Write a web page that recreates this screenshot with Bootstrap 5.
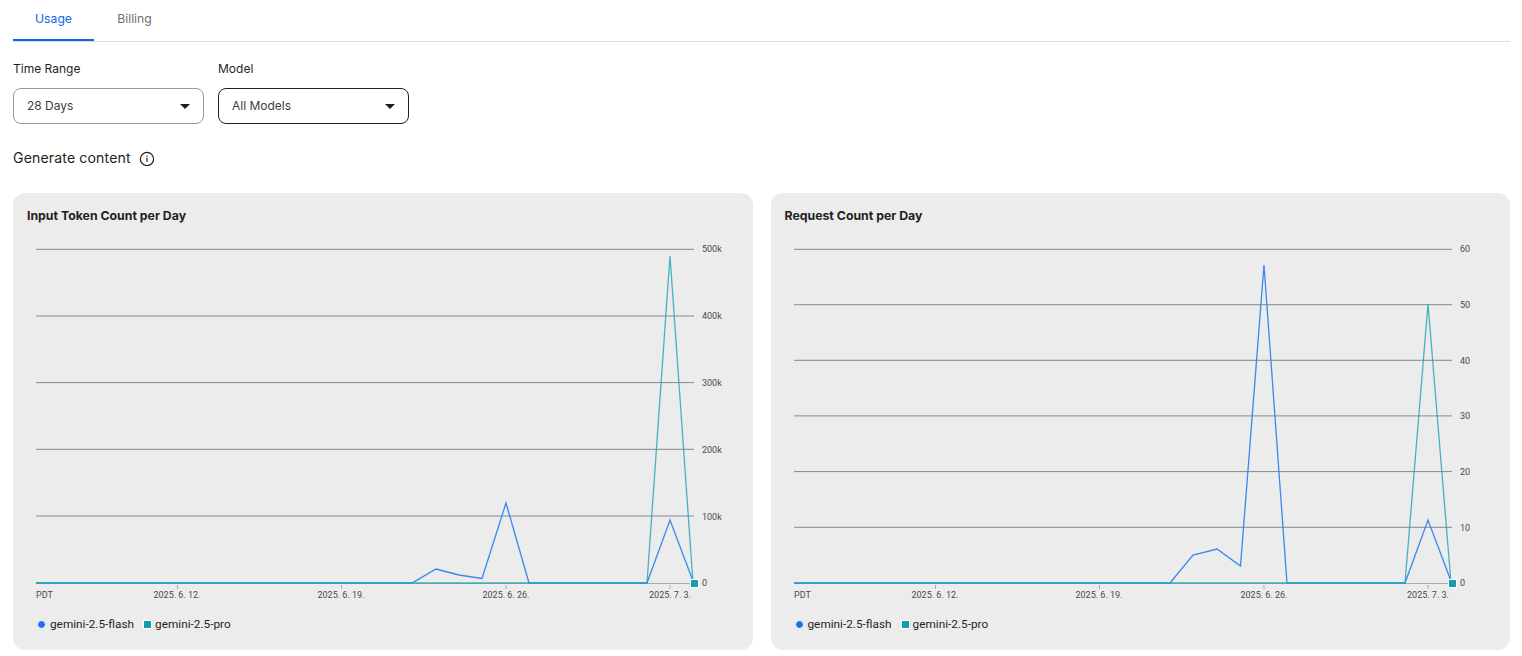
<!DOCTYPE html>
<html lang="en">
<head>
<meta charset="utf-8">
<title>Usage</title>
<link rel="stylesheet" href="https://cdn.jsdelivr.net/npm/bootstrap@5.3.0/dist/css/bootstrap.min.css">
<style>
html,body{height:656px;overflow:hidden;background:#fff}
body{font-family:Inter,Roboto,"Liberation Sans",sans-serif;color:#1f1f1f;padding:0 12px 0 13px}
.tabbar{height:42px;border-bottom:1px solid #e0e0e0}
.tabitem{width:81px;height:41px;padding-top:11px;font-size:12.2px;line-height:16px;text-align:center;color:#6f6f6f;text-decoration:none;font-weight:400}
.tabitem.on{color:#0b67e6;border-bottom:2px solid #0b67e6}
.filters{margin-top:19px;gap:14px}
.flabel{font-size:12px;line-height:16px;height:16px;margin-bottom:11px}
.pick{width:191px;height:36px;border:1px solid #999;border-radius:8px;padding:0 13px;font-size:12px;color:#3c4043}
.pick.dark{border-color:#1f1f1f}
.caret{width:0;height:0;border-left:5px solid transparent;border-right:5px solid transparent;border-top:5px solid #1f1f1f}
.sect{margin-top:25px;height:18px;font-size:14.1px;line-height:18px;font-weight:400;letter-spacing:.13px;gap:8px}
.chartcols{margin-top:26px;gap:18px}
.panel{flex:1 1 0;height:457px;background:#ececec;border-radius:12px;overflow:hidden}
.ptitle{font-size:12.3px;font-weight:650;line-height:16px;margin:15px 0 0 14px;color:#1f1f1f}
.plot{display:block;margin-top:10px;width:739px;height:366px}
.plot text{font-family:Roboto,"Liberation Sans",sans-serif;font-size:9px;fill:#4a4a4a}
.grid{stroke:#85888b;stroke-width:1}
.flash{fill:none;stroke:#3b86f0;stroke-width:1.3;stroke-linejoin:miter}
.pro{fill:none;stroke:#1ea4b4;stroke-width:1.3;opacity:.8}
.legendrow{margin:16px 0 0 21px;font-family:Roboto,"Liberation Sans",sans-serif;font-size:11.8px;line-height:16px;color:#1f1f1f}
.ldot{width:9px;height:9px;border-radius:50%;background:#1a73e8;border:1px solid #fff;margin-right:4px;margin-left:3px}
.lsq{width:9px;height:9px;background:#129eaf;border:1px solid #fff;margin-left:9px;margin-right:3px}
</style>
</head>
<body>
<nav class="tabbar d-flex">
  <a class="tabitem on" href="#">Usage</a>
  <a class="tabitem" href="#">Billing</a>
</nav>
<div class="filters d-flex">
  <div>
    <div class="flabel">Time Range</div>
    <div class="pick d-flex align-items-center justify-content-between"><span>28 Days</span><span class="caret"></span></div>
  </div>
  <div>
    <div class="flabel">Model</div>
    <div class="pick dark d-flex align-items-center justify-content-between"><span>All Models</span><span class="caret"></span></div>
  </div>
</div>
<div class="sect d-flex align-items-center">
  <span>Generate content</span>
  <svg width="16" height="16" viewBox="0 0 16 16" aria-hidden="true"><circle cx="8" cy="9" r="6.6" fill="none" stroke="#1f1f1f" stroke-width="1.2"/><rect x="7.4" y="7.8" width="1.2" height="4" fill="#1f1f1f"/><rect x="7.4" y="5.5" width="1.2" height="1.3" fill="#1f1f1f"/></svg>
</div>
<div class="chartcols d-flex">
  <section class="panel">
    <div class="ptitle">Input Token Count per Day</div>
    <svg class="plot" viewBox="13 234 739 366">
      <g class="grid"><path d="M36 249.300H694M36 316H694M36 382.600H694M36 449.300H694M36 516H694"/></g>
      <path d="M36 583.500H694" stroke="#aaa" stroke-width="1"/>
      <path d="M177.500 585v4M341.500 585v4M506 585v4M670 585v4" stroke="#aaa"/>
      <polyline class="flash" points="36,583 412,583 436,569 459,575 482,578.500 506,503 529,583 647,583 670,520 693,581"/>
      <polyline class="pro" points="36,583 647,583 670,256 693,583"/>
      <rect x="690.500" y="579.500" width="8" height="8" fill="#129eaf" stroke="#fff"/>
      <text x="702" y="252">500k</text><text x="702" y="319">400k</text><text x="702" y="386">300k</text><text x="702" y="453">200k</text><text x="702" y="520">100k</text><text x="702" y="586">0</text>
      <text x="36" y="598">PDT</text><text x="177" y="598" text-anchor="middle">2025. 6. 12.</text><text x="341" y="598" text-anchor="middle">2025. 6. 19.</text><text x="506" y="598" text-anchor="middle">2025. 6. 26.</text><text x="670" y="598" text-anchor="middle">2025. 7. 3.</text>
    </svg>
    <div class="legendrow d-flex align-items-center"><span class="ldot"></span><span>gemini-2.5-flash</span><span class="lsq"></span><span>gemini-2.5-pro</span></div>
  </section>
  <section class="panel">
    <div class="ptitle">Request Count per Day</div>
    <svg class="plot" viewBox="771 234 739 366">
      <g class="grid"><path d="M794 249.300H1452M794 304.700H1452M794 360.300H1452M794 415.900H1452M794 471.600H1452M794 527.300H1452"/></g>
      <path d="M794 583.500H1452" stroke="#aaa" stroke-width="1"/>
      <path d="M935.500 585v4M1099.500 585v4M1264 585v4M1428 585v4" stroke="#aaa"/>
      <polyline class="flash" points="794,583 1170,583 1193,555 1217,549 1240.500,566 1264,265 1287,583 1405,583 1428,520 1451,581"/>
      <polyline class="pro" points="794,583 1405,583 1428,304 1451,583"/>
      <rect x="1448.500" y="579.500" width="8" height="8" fill="#129eaf" stroke="#fff"/>
      <text x="1460" y="252">60</text><text x="1460" y="308">50</text><text x="1460" y="364">40</text><text x="1460" y="419">30</text><text x="1460" y="475">20</text><text x="1460" y="531">10</text><text x="1460" y="586">0</text>
      <text x="794" y="598">PDT</text><text x="935" y="598" text-anchor="middle">2025. 6. 12.</text><text x="1099" y="598" text-anchor="middle">2025. 6. 19.</text><text x="1264" y="598" text-anchor="middle">2025. 6. 26.</text><text x="1428" y="598" text-anchor="middle">2025. 7. 3.</text>
    </svg>
    <div class="legendrow d-flex align-items-center"><span class="ldot"></span><span>gemini-2.5-flash</span><span class="lsq"></span><span>gemini-2.5-pro</span></div>
  </section>
</div>
<script src="https://cdn.jsdelivr.net/npm/bootstrap@5.3.0/dist/js/bootstrap.bundle.min.js"></script>
</body>
</html>
